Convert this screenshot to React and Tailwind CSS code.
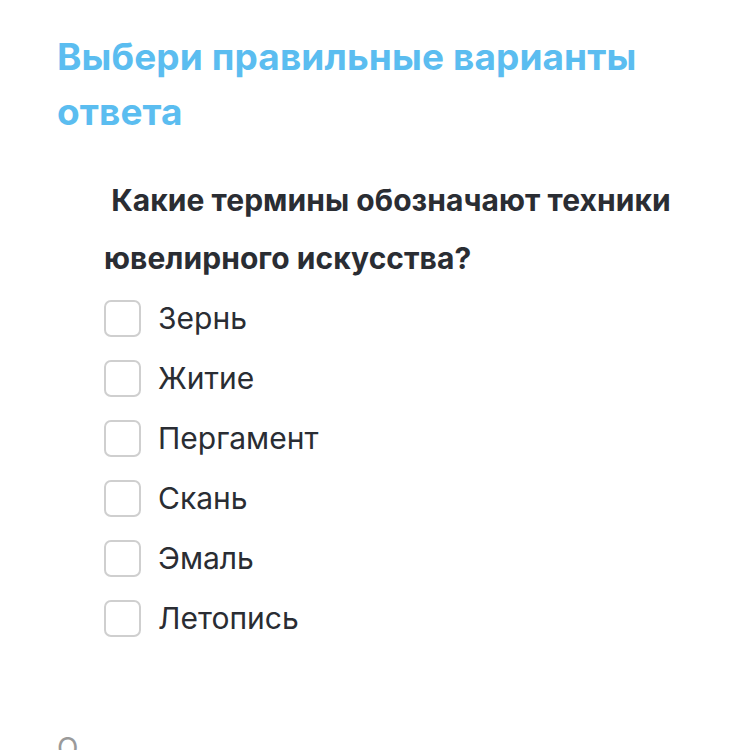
const OPTIONS = ["Зернь", "Житие", "Пергамент", "Скань", "Эмаль", "Летопись"];

export default function App() {
  return (
    <div className="h-[750px] w-[750px] overflow-hidden bg-white font-['Inter',sans-serif]">
      <div className="px-[57px] pt-[29px]">
        <h1 className="text-[37px] font-bold leading-[55px] tracking-[0.1px] text-[#5bbdf0]">
          Выбери правильные варианты ответа
        </h1>

        <div className="mt-[32px] pl-[47px]">
          <p className="text-[30px] font-bold leading-[58px] tracking-[0.05px] text-[#2a2d33]">
            &nbsp;Какие термины обозначают техники ювелирного искусства?
          </p>

          <div className="mt-[1px] flex flex-col">
            {OPTIONS.map((o) => (
              <label key={o} className="flex h-[60px] items-center gap-[17px]">
                <span className="h-[37px] w-[37px] shrink-0 rounded-[7px] border-2 border-[#cfcfcf] bg-white" />
                <span className="text-[30px] leading-none text-[#2a2d33]">{o}</span>
              </label>
            ))}
          </div>
        </div>

        <p className="mt-[79px] text-[28px] leading-[42px] text-[#9a9a9a]">О</p>
      </div>
    </div>
  );
}
